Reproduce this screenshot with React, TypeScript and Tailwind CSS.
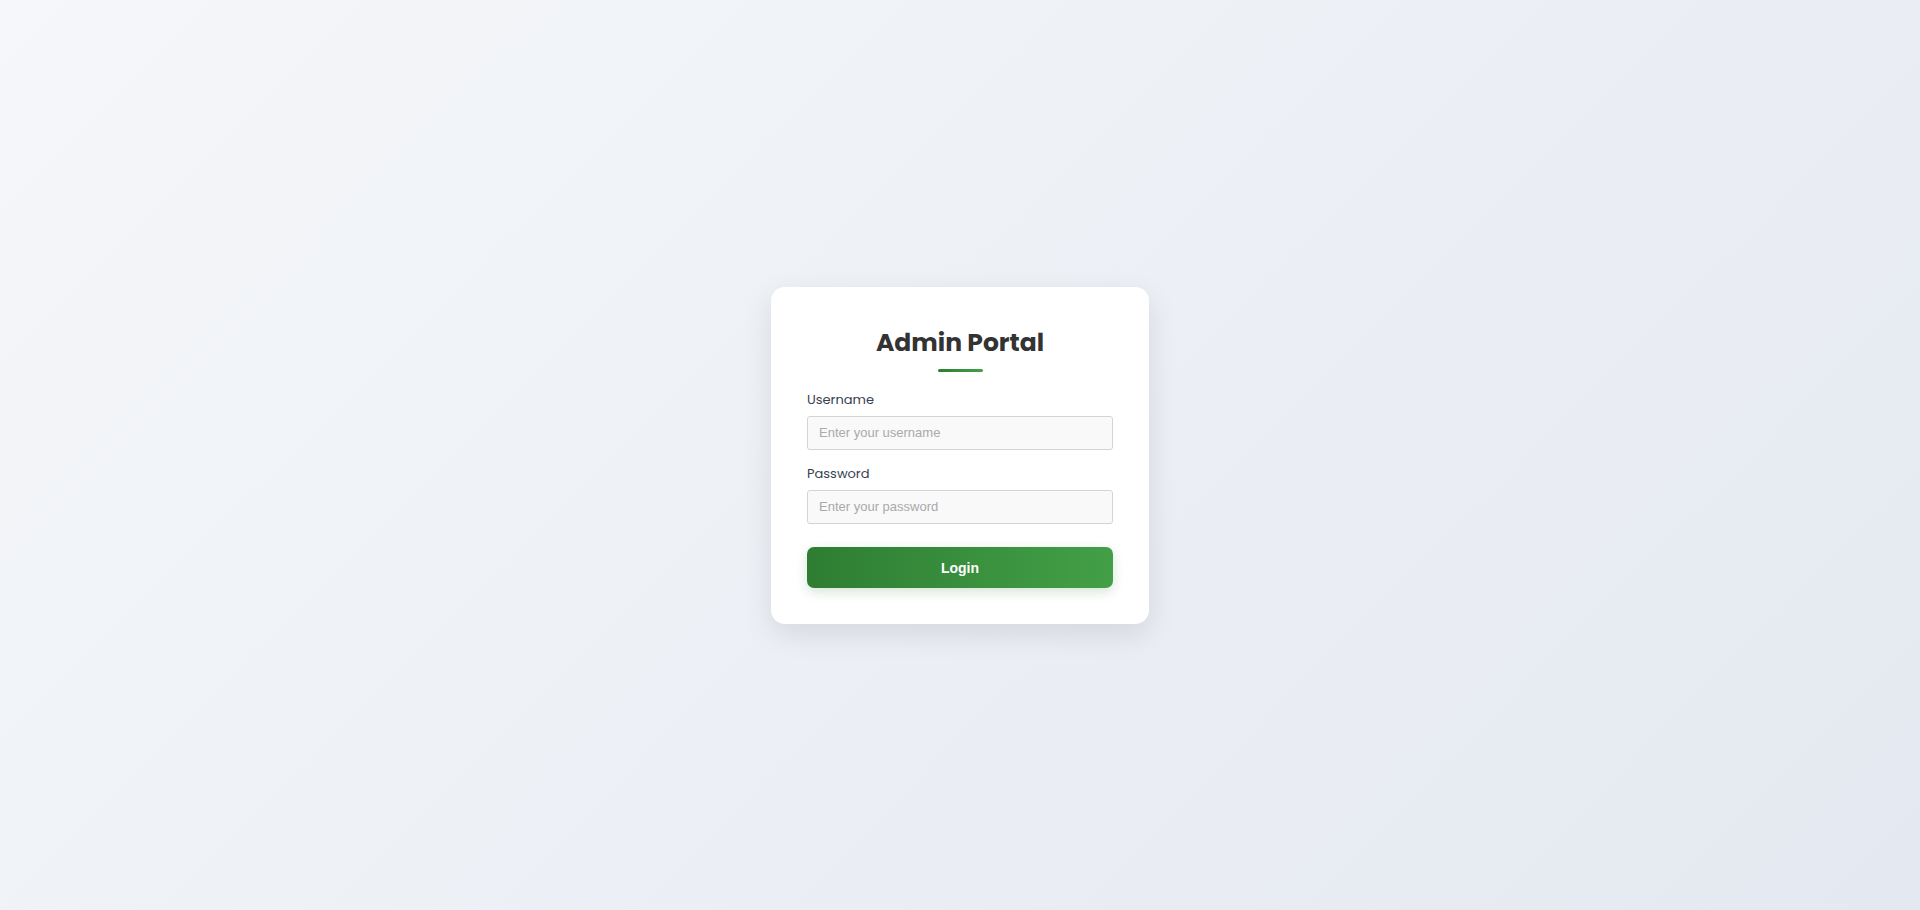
import { useState } from "react";

type FieldProps = {
  id: string;
  label: string;
  type: string;
  placeholder: string;
};

function Field({ id, label, type, placeholder }: FieldProps) {
  const [value, setValue] = useState("");
  return (
    <div className="mb-3.5">
      <label htmlFor={id} className="mb-1.5 block text-[13px] leading-5 text-[#374151]">
        {label}
      </label>
      <input
        id={id}
        name={id}
        type={type}
        value={value}
        onChange={(e) => setValue(e.target.value)}
        placeholder={placeholder}
        className="block h-[34px] w-full rounded-[3px] border border-[#d1d5db] bg-[#f9f9f9] px-[11px] font-['Liberation_Sans',Arial,sans-serif] text-[13px] text-[#333] outline-none placeholder:text-[#a9a9a9] focus:border-[#43a047]"
      />
    </div>
  );
}

export default function App() {
  return (
    <main className="flex min-h-screen items-center justify-center bg-linear-[135deg,#f5f7fa,#e4e8f0] font-[Poppins,Inter,sans-serif]">
      <form
        onSubmit={(e) => e.preventDefault()}
        className="w-full max-w-[378px] rounded-[14px] bg-white p-9 shadow-[0_10px_30px_rgba(0,0,0,0.1)]"
      >
        <h1 className="text-center text-[25px] leading-10 font-bold text-[#333]">Admin Portal</h1>
        <div className="mx-auto mt-1.5 mb-[18px] h-[3px] w-[45px] rounded-[2px] bg-linear-[90deg,#2e7d32,#43a047]" />
        <Field id="username" label="Username" type="text" placeholder="Enter your username" />
        <Field id="password" label="Password" type="password" placeholder="Enter your password" />
        <button
          type="submit"
          className="mt-[23px] block h-[41px] w-full cursor-pointer rounded-[7px] bg-linear-[90deg,#2e7d32,#43a047] pt-0.5 font-['Liberation_Sans',Arial,sans-serif] text-[14px] font-bold text-white shadow-[0_4px_12px_rgba(46,125,50,0.2)]"
        >
          Login
        </button>
      </form>
    </main>
  );
}
